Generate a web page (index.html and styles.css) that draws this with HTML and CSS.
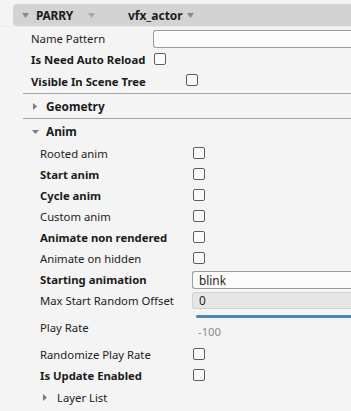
FILE: index.html
```html
<!DOCTYPE html>
<html>
<head>
<meta charset="utf-8">
<link rel="stylesheet" href="styles.css">
</head>
<body>
<div class="header">
  <svg class="hcaret" width="7" height="5" viewBox="0 0 7 5"><path d="M0 0h7L3.5 5z" fill="#8a8a8a"/></svg>
  <span class="htitle">PARRY</span>
  <svg class="hcaret2" width="7" height="5" viewBox="0 0 7 5"><path d="M0 0h7L3.5 5z" fill="#a8a8a8"/></svg>
  <span class="htype">vfx_actor</span>
  <svg class="hcaret3" width="7" height="5" viewBox="0 0 7 5"><path d="M0 0h7L3.5 5z" fill="#8a8a8a"/></svg>
</div>

<div class="top">
  <div class="row">
    <span class="label lw-a">Name Pattern</span>
    <span class="input wide"></span>
  </div>
  <div class="row">
    <span class="label bold lw-a">Is Need Auto Reload</span>
    <span class="check"></span>
  </div>
  <div class="row r22">
    <span class="label bold lw-b">Visible In Scene Tree</span>
    <span class="check"></span>
  </div>
</div>

<div class="sep first"></div>
<div class="group geo">
  <svg class="tri-r" width="4" height="7" viewBox="0 0 4 7"><path d="M0 0l4 3.5L0 7z" fill="#7a7a7a"/></svg>
  <span class="gtitle">Geometry</span>
</div>
<div class="sep"></div>
<div class="group anim">
  <svg class="tri-d" width="7" height="4" viewBox="0 0 7 4"><path d="M0 0h7L3.5 4z" fill="#7a7a7a"/></svg>
  <span class="gtitle">Anim</span>
</div>

<div class="animprops">
  <div class="row"><span class="label lw-c">Rooted anim</span><span class="check"></span></div>
  <div class="row"><span class="label bold lw-c">Start anim</span><span class="check"></span></div>
  <div class="row"><span class="label bold lw-c">Cycle anim</span><span class="check"></span></div>
  <div class="row"><span class="label lw-c">Custom anim</span><span class="check"></span></div>
  <div class="row"><span class="label bold lw-c">Animate non rendered</span><span class="check"></span></div>
  <div class="row"><span class="label lw-c">Animate on hidden</span><span class="check"></span></div>
  <div class="row"><span class="label bold lw-c">Starting animation</span><span class="input field">blink</span></div>
  <div class="row"><span class="label lw-c">Max Start Random Offset</span><span class="input field disabled">0</span></div>
  <div class="sliderrow"><span class="slider"></span></div>
  <div class="row rate"><span class="label lw-c up">Play Rate</span><span class="ratev">-100</span></div>
  <div class="row"><span class="label lw-c">Randomize Play Rate</span><span class="check"></span></div>
  <div class="row"><span class="label bold lw-c">Is Update Enabled</span><span class="check"></span></div>
  <div class="row layer">
    <svg class="tri-r" width="4" height="7" viewBox="0 0 4 7"><path d="M0 0l4 3.5L0 7z" fill="#7a7a7a"/></svg>
    <span class="label">Layer List</span>
  </div>
</div>
</body>
</html>
```

FILE: styles.css
```css
html, body {
  margin: 0;
  padding: 0;
  background: #f4f4f4;
  overflow: hidden;
}
body {
  width: 351px;
  height: 411px;
  font-family: "Noto Sans", "Open Sans", sans-serif;
  font-size: 11.3px;
  color: #222;
}
.header {
  margin: 4px 0 0 13px;
  height: 22px;
  background: #d3d3d3;
  border-radius: 4px 0 0 4px;
  display: flex;
  align-items: center;
  font-size: 12px;
}
.hcaret { margin-left: 9px; }
.htitle { margin-left: 7px; font-weight: 700; color: #1e1e1e; letter-spacing: -0.3px; }
.hcaret2 { margin-left: 15px; }
.htype { margin-left: 33px; font-weight: 700; color: #1e1e1e; }
.hcaret3 { margin-left: 4px; }

.top {
  padding-left: 31px;
  padding-top: 1px;
  border-top: 1px solid #e9e9e9;
}
.row {
  display: flex;
  align-items: center;
  height: 21px;
  white-space: nowrap;
}
.row.r22 { height: 22px; }
.label { flex: none; line-height: 15px; }
.bold { font-weight: 700; color: #1a1a1a; }
.lw-a { width: 123px; }
.lw-b { width: 155px; }
.lw-c { width: 153px; }

.input {
  flex: none;
  box-sizing: border-box;
  height: 18px;
  background: #fcfcfc;
  border: 1px solid #9c9c9c;
  border-right: none;
  border-radius: 3px 0 0 3px;
}
.input.wide { width: 198px; margin-left: -1px; }
.input.field {
  width: 159px;
  margin-left: -1px;
  padding-left: 6px;
  line-height: 16px;
  color: #222;
  font-size: 11.8px;
}
.input.disabled {
  background: #e6e6e6;
  border-color: #d2d2d2;
  height: 17px;
  line-height: 15px;
}

.check {
  flex: none;
  box-sizing: border-box;
  width: 12px;
  height: 12px;
  margin-bottom: 2px;
  border: 1px solid #5e5e5e;
  border-radius: 2px;
  background: #fbfbfb;
}

.sep {
  margin-left: 23px;
  height: 1px;
  background: #a3a3a3;
}
.sep.first { margin-top: 1px; }
.group {
  display: flex;
  align-items: center;
  font-weight: 700;
  color: #1c1c1c;
  font-size: 11.8px;
}
.group.geo { height: 24px; padding-top: 1px; box-sizing: border-box; }
.group.anim { height: 24px; padding-top: 1px; box-sizing: border-box; }
.group .tri-r { margin-left: 33px; }
.group .tri-d { margin-left: 32px; }
.gtitle { margin-left: 9px; line-height: 15px; }
.group.anim .gtitle { margin-left: 7px; }

.animprops {
  padding-left: 40px;
}
.sliderrow {
  height: 12px;
  padding-left: 156px;
  padding-top: 4px;
  box-sizing: border-box;
}
.slider {
  display: block;
  height: 3px;
  width: 155px;
  background: #4a87bb;
  border-radius: 2px 0 0 2px;
}
.row.rate {
  height: 21px;
  align-items: flex-start;
}
.up { line-height: 16px; margin-top: -3px; }
.ratev {
  line-height: 16px;
  margin-top: 1px;
  margin-left: 5px;
  color: #8c8c8c;
}
.row.layer { height: 22px; }
.row.layer .tri-r { margin-left: 3px; margin-right: 10px; }
```
